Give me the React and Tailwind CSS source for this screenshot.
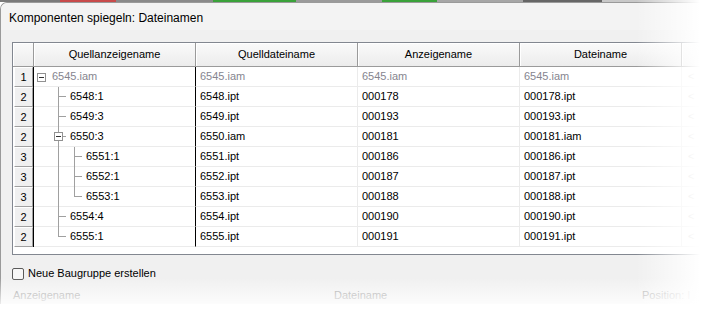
import React from "react";

const rows = [
  { n: 1, name: "6545.iam", src: "6545.iam", disp: "6545.iam", file: "6545.iam", gray: true, tree: "root" },
  { n: 2, name: "6548:1", src: "6548.ipt", disp: "000178", file: "000178.ipt", tree: "l2" },
  { n: 2, name: "6549:3", src: "6549.ipt", disp: "000193", file: "000193.ipt", tree: "l2" },
  { n: 2, name: "6550:3", src: "6550.iam", disp: "000181", file: "000181.iam", tree: "l2box" },
  { n: 3, name: "6551:1", src: "6551.ipt", disp: "000186", file: "000186.ipt", tree: "l3" },
  { n: 3, name: "6552:1", src: "6552.ipt", disp: "000187", file: "000187.ipt", tree: "l3" },
  { n: 3, name: "6553:1", src: "6553.ipt", disp: "000188", file: "000188.ipt", tree: "l3last" },
  { n: 2, name: "6554:4", src: "6554.ipt", disp: "000190", file: "000190.ipt", tree: "l2" },
  { n: 2, name: "6555:1", src: "6555.ipt", disp: "000191", file: "000191.ipt", tree: "l2last" },
];

function MinusBox({ className }) {
  return (
    <span className={"absolute w-[9px] h-[9px] border border-[#919191] bg-white flex items-center justify-center " + className}>
      <span className="block w-[5px] h-px bg-[#333]" />
    </span>
  );
}

function TreeCell({ r }) {
  const t = r.tree;
  const lineCol = "bg-[#a0a0a0]";
  let pad = "pl-[18px]";
  if (t.startsWith("l2")) pad = "pl-[36px]";
  if (t.startsWith("l3")) pad = "pl-[52px]";
  return (
    <div className={"relative h-full flex items-center w-[162px] border-r border-black border-b border-b-[#ebebeb] " + pad}>
      {t === "root" && <MinusBox className="left-[3px] top-[6px]" />}
      {t !== "root" && (
        <span className={"absolute left-[24px] top-0 w-px " + lineCol + (t === "l2last" ? " h-[10px]" : " h-[20px]")} />
      )}
      {(t === "l2" || t === "l2last") && <span className={"absolute left-[24px] top-[9px] w-[8px] h-px " + lineCol} />}
      {t === "l2box" && (
        <>
          <span className={"absolute left-[28px] top-[9px] w-[4px] h-px " + lineCol} />
          <MinusBox className="left-[20px] top-[5px]" />
        </>
      )}
      {t.startsWith("l3") && (
        <>
          <span className={"absolute left-[40px] top-0 w-px " + lineCol + (t === "l3last" ? " h-[10px]" : " h-[20px]")} />
          <span className={"absolute left-[40px] top-[9px] w-[8px] h-px " + lineCol} />
        </>
      )}
      <span className={r.gray ? "text-[#85858f]" : "text-black"}>{r.name}</span>
    </div>
  );
}

function HeaderCell({ children, className = "" }) {
  return (
    <div
      className={
        "h-full flex items-center justify-center border-r border-b border-[#9a9a9a] bg-gradient-to-b from-[#fafafa] to-[#ececec] shadow-[inset_1px_1px_0_#ffffff] " +
        className
      }
    >
      {children}
    </div>
  );
}

export default function App() {
  const strip = [
    ["w-[60px]", "bg-[#7a7a7a]"],
    ["w-[56px]", "bg-[#c84b4b]"],
    ["w-[97px]", "bg-[#8a8a8a]"],
    ["w-[83px]", "bg-[#3aa23a]"],
    ["w-[86px]", "bg-[#9a9a9a]"],
    ["w-[55px]", "bg-[#3aa23a]"],
    ["w-[86px]", "bg-[#a6a6a6]"],
    ["w-[79px]", "bg-[#666]"],
    ["flex-1", "bg-[#c8c8c8]"],
  ];
  return (
    <div className="relative w-[716px] h-[316px] overflow-hidden bg-white font-['Liberation_Sans',Arial,sans-serif] text-[11px] text-black">
      <div className="flex h-[2px]">
        {strip.map(([w, c], i) => (
          <div key={i} className={w + " " + c} />
        ))}
      </div>
      <div className="h-[302px] rounded-tl-[7px] border-l border-t border-[#9a9a9a] bg-[#f0f0f0] overflow-hidden flex flex-col">
        <div className="shrink-0 h-[27px] bg-[#f3f3f3] flex items-center pl-[8px] text-[12px] pt-[2px]">
          Komponenten spiegeln: Dateinamen
        </div>
        <div className="shrink-0 pl-[11px] pt-[12px] flex flex-col">
          <div className="shrink-0 w-[760px] border border-[#828790] bg-white flex flex-col h-[213px]">
            <div className="flex h-[24px] shrink-0">
              <HeaderCell className="w-[21px]" />
              <HeaderCell className="w-[162px]">Quellanzeigename</HeaderCell>
              <HeaderCell className="w-[162px]">Quelldateiname</HeaderCell>
              <HeaderCell className="w-[162px]">Anzeigename</HeaderCell>
              <HeaderCell className="w-[162px]">Dateiname</HeaderCell>
              <HeaderCell className="flex-1" />
            </div>
            {rows.map((r, i) => (
              <div key={i} className="flex h-[20px] shrink-0">
                <div className="w-[21px] h-full pl-[1px] border-r border-black">
                  <div className="h-full flex items-center justify-center bg-[#f0f0f0] border-t border-l border-white border-b border-r border-b-[#a0a0a0] border-r-[#a0a0a0]">
                    {r.n}
                  </div>
                </div>
                <TreeCell r={r} />
                {[r.src, r.disp, r.file].map((v, j) => (
                  <div
                    key={j}
                    className={
                      "w-[162px] h-full flex items-center pl-[4px] border-r border-b border-[#ebebeb] " +
                      (r.gray ? "text-[#85858f]" : "text-black")
                    }
                  >
                    {v}
                  </div>
                ))}
                <div className="flex-1 h-full flex items-center pl-[6px] border-b border-[#ebebeb] text-[#c0c0c0]">&lt;</div>
              </div>
            ))}
          </div>
          <div className="shrink-0 flex items-center gap-[4px] mt-[12px] h-[13px]">
            <span className="w-[12px] h-[12px] rounded-[2px] border border-[#5a5a5a] bg-[#f7f7f7]" />
            <span>Neue Baugruppe erstellen</span>
          </div>
          <div className="shrink-0 flex mt-[9px] leading-[13px] text-[#9a9a9a]">
            <span className="w-[322px] pl-[1px]">Anzeigename</span>
            <span className="w-[308px]">Dateiname</span>
            <span>Position: I</span>
          </div>
        </div>
      </div>
      <div className="pointer-events-none absolute left-0 right-0 top-[278px] h-[26px] bg-gradient-to-b from-transparent to-white/80" />
      <div className="pointer-events-none absolute top-0 bottom-0 right-0 w-[80px] bg-gradient-to-r from-transparent to-white to-[80%]" />
    </div>
  );
}
